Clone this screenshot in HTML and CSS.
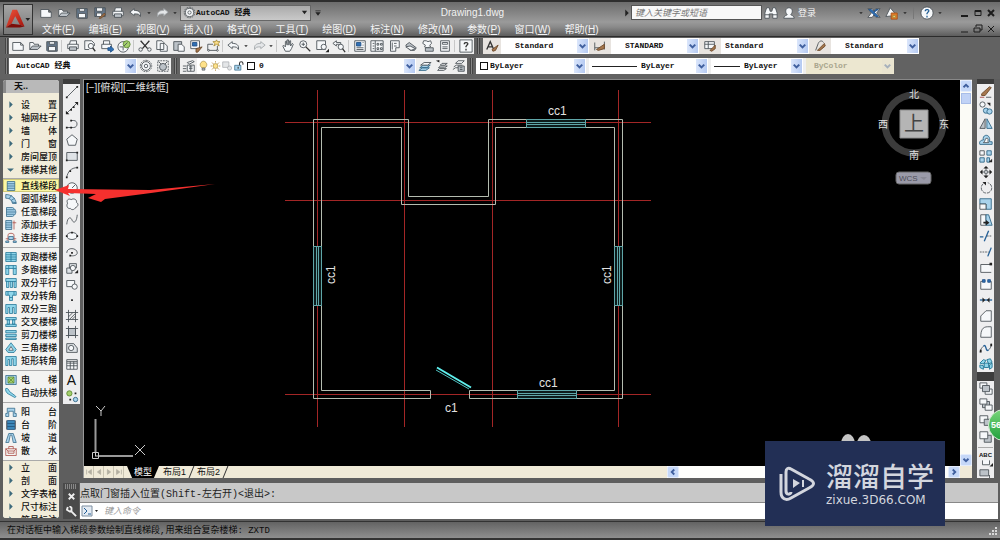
FILE: index.html
```html
<!DOCTYPE html>
<html lang="zh-CN">
<head>
<meta charset="utf-8">
<meta name="viewport" content="width=device-width, initial-scale=1">
<title>Drawing1.dwg</title>
<link rel="stylesheet" href="styles.css">
</head>
<body>
<svg class="defs" aria-hidden="true">
  <defs>
    <linearGradient id="red" x1="0" y1="0" x2="1" y2="1"><stop offset="0" stop-color="#f0563c"/><stop offset="1" stop-color="#a3120c"/></linearGradient>
    <linearGradient id="green" x1="0" y1="0" x2="0" y2="1"><stop offset="0" stop-color="#7ad67a"/><stop offset="1" stop-color="#1fa03c"/></linearGradient>
  </defs>
  <symbol id="new" viewBox="0 0 16 16"><path class="w" d="M2 4h9l3 3v6H2zM11 4v3h3"/></symbol>
  <symbol id="open" viewBox="0 0 16 16"><path class="w" d="M2 12V4h4l1 2h5v2"/><path class="g" d="M2 12l3-4h10l-4 4z"/></symbol>
  <symbol id="save" viewBox="0 0 16 16"><path class="n" d="M2 3h12v11H3l-1-1z"/><path class="w" d="M5 3h6v3H5zM4 8.500h8v5H4z"/></symbol>
  <symbol id="saveas" viewBox="0 0 16 16"><path class="n" d="M2 2h12v10H2z"/><path class="w" d="M4 2h7v4H4zM4 8h6v4H4z"/><path class="o" d="M7 14l6-6 1 2-5 4z"/></symbol>
  <symbol id="print" viewBox="0 0 16 16"><path class="w" d="M4 6l1-4h7v4M2 6h12v5H2z"/><path class="g" d="M4 9h8v4H4z"/></symbol>
  <symbol id="preview" viewBox="0 0 16 16"><path class="w" d="M2 2h8l3 3v3M2 2v10h5"/><circle class="w" cx="9" cy="8" r="3"/><path class="k2" d="M11 10l3 4"/></symbol>
  <symbol id="publish" viewBox="0 0 16 16"><path class="w" d="M4 6V2h7v4M2 6h11v5H2z"/><path class="bl" d="M9 10h3V8l4 4-4 3v-2H9z"/></symbol>
  <symbol id="globe" viewBox="0 0 16 16"><circle class="w" cx="7" cy="9" r="6"/><circle class="gr" cx="11" cy="6" r="4"/><path d="M8 8l4-4M3 9h4v4"/></symbol>
  <symbol id="cut" viewBox="0 0 16 16"><path class="k2" d="M3 2l8 9M13 2L5 11"/><circle cx="3" cy="12" r="2"/><circle cx="13" cy="12" r="2"/></symbol>
  <symbol id="copy" viewBox="0 0 16 16"><path class="w" d="M2 2h6l2 2v8H2zM6 5h5l3 3v6H6z"/></symbol>
  <symbol id="paste" viewBox="0 0 16 16"><path class="g" d="M2 3h9v10H2z"/><path class="w" d="M7 6h4l3 3v5H7z"/></symbol>
  <symbol id="match" viewBox="0 0 16 16"><path class="w" d="M2 2h10v9H2z"/><path class="bl" d="M4 4h5v4H4z"/><path class="o" d="M8 11l7-2-5 6H8z"/></symbol>
  <symbol id="block" viewBox="0 0 16 16"><path d="M2 6h6M2 6v7h11V8"/><path class="y" d="M12 1l1 2 3 0-2 2 1 3-3-2-3 2 1-3-2-2h3z"/><circle class="w" cx="3" cy="13" r="1"/><circle class="w" cx="13" cy="13" r="1"/></symbol>
  <symbol id="undo" viewBox="0 0 16 16"><path class="w" d="M1 7l5-4v2c5 0 8 2 7 7-1-3-3-3-7-3v2z"/></symbol>
  <symbol id="redo" viewBox="0 0 16 16"><path class="pale" d="M15 7l-5-4v2C5 5 2 7 3 12c1-3 3-3 7-3v2z"/></symbol>
  <symbol id="drop" viewBox="0 0 8 16"><path class="k" d="M2 7h4L4 9z"/></symbol>
  <symbol id="hand" viewBox="0 0 16 16"><path class="w" d="M5 14L2 8l1-1 2 2V3l1-1 1 5V1h1.500l.5 6 1-5h1v6l2-3 1 1-2 5-2 3z"/></symbol>
  <symbol id="zoom" viewBox="0 0 16 16"><circle class="w" cx="6" cy="6" r="4"/><path class="k2" d="M9 9l5 5"/><path d="M4 6h4M6 4v4"/></symbol>
  <symbol id="zwin" viewBox="0 0 16 16"><path class="w" d="M2 2h10v10H2z"/><circle class="w" cx="10" cy="9" r="3"/><path class="k" d="M12 15h4v-4z"/></symbol>
  <symbol id="zprev" viewBox="0 0 16 16"><path class="w" d="M1 5l4-3v2h5v2H5v2z"/><circle class="w" cx="10" cy="9" r="3"/><path class="k2" d="M12 11l3 4"/></symbol>
  <symbol id="props" viewBox="0 0 16 16"><path class="w" d="M2 2h12v12H2z"/><path class="bl" d="M4 4h5v4H4z"/><path d="M4 10h8M4 12h8M11 4h1M11 7h1"/></symbol>
  <symbol id="center" viewBox="0 0 16 16"><path class="w" d="M1 2h14v12H1zM6 2v12M8 5h2v2H8zM12 5h2v2h-2zM8 10h2v2H8zM12 10h2v2h-2zM3 5h2M3 8h2M3 11h2"/></symbol>
  <symbol id="palettes" viewBox="0 0 16 16"><path class="w" d="M4 2h10v8h-4v4H4zM6 4v8M8 5h3M8 8h3"/></symbol>
  <symbol id="sheet" viewBox="0 0 16 16"><path class="g" d="M2 7l4-3 8 6-2 3H7z"/><path class="w" d="M2 9l5-1 6 3-5 2z"/></symbol>
  <symbol id="markup" viewBox="0 0 16 16"><path class="w" d="M3 2h3l2 1 3-1 1 3-2 2 1 2-4 1-3-1 1-2-3-2z"/><path class="g" d="M5 10h9v4H5z"/></symbol>
  <symbol id="calc" viewBox="0 0 16 16"><path class="w" d="M3 2h10v12H3zM5 4h6v2H5zM5 9h6M5 11h6"/></symbol>
  <symbol id="help" viewBox="0 0 16 16"><path class="w" d="M1 1h14v14H1z"/><path class="k2" d="M6 6c0-3 5-2 4 0L8 8.500v1M8 11v2"/></symbol>
  <symbol id="tstyle" viewBox="0 0 16 16"><path class="k2" d="M2 12L6 3l4 9M4 9h5"/><path class="o" d="M8 12l7-5-3 6-3 1z"/></symbol>
  <symbol id="dstyle" viewBox="0 0 16 16"><path d="M2 4v9M13 3v9M2 10h11"/><path class="o" d="M4 12L13 6v5l-7 2z"/></symbol>
  <symbol id="tabstyle" viewBox="0 0 16 16"><path class="w" d="M2 3h11v8H2zM2 6h11M6 3v8"/><path class="o" d="M8 13l6-6v4l-4 3z"/></symbol>
  <symbol id="mstyle" viewBox="0 0 16 16"><path d="M3 13L6 5c2-4 5-3 6-1"/><path class="o" d="M5 13l8-8 1 3-6 5z"/></symbol>
  <symbol id="gear" viewBox="0 0 16 16"><circle class="w" cx="8" cy="8" r="5"/><circle cx="8" cy="8" r="2"/><path class="dash" d="M8 1.500a6.500 6.500 0 1 1 0 13 6.500 6.500 0 1 1 0-13"/></symbol>
  <symbol id="wsave" viewBox="0 0 16 16"><path class="dash" d="M2 2h12v12H2z"/><circle class="g" cx="8" cy="9" r="4"/><path d="M3 3l3 3M13 3l-3 3"/></symbol>
  <symbol id="layers" viewBox="0 0 16 16"><path class="w" d="M6 4l6-2 2 1-6 3zM6 7h8v7H6z"/><path d="M1 8h4M1 11h4M1 14h4M8 9h4M8 11h4M10 7v7"/></symbol>
  <symbol id="stack" viewBox="0 0 16 16"><path class="lb" d="M1 13l4-3h8l-4 3zM2 10l4-3h8l-4 3z"/><path class="w" d="M3 7l4-3h8l-4 3z"/></symbol>
  <symbol id="lprev" viewBox="0 0 16 16"><path class="w" d="M3 13l2-2h8l-3 2zM4 10l2-2h8l-3 2zM6 7l2-2h6l-3 2z"/><path class="k" d="M1 2l4-1v3z"/></symbol>
  <symbol id="lstate" viewBox="0 0 16 16"><path class="w" d="M1 12l3-2h4M2 9l3-2h7M4 5l3-3h7l-3 3z"/><path class="g" d="M7 8h7v6H7z"/><path d="M9 10h3M9 12h3"/></symbol>
  <symbol id="bulb" viewBox="0 0 16 16"><path class="y" d="M6 11c-6-5-1-10 2-10s8 5 2 10z"/><path class="g" d="M6 11h4v3H6z"/></symbol>
  <symbol id="sun" viewBox="0 0 16 16"><circle class="y" cx="8" cy="8" r="3.500"/><path class="os" d="M8 1v2M8 13v2M1 8h2M13 8h2M3 3l2 2M11 11l2 2M13 3l-2 2M5 11l-2 2"/></symbol>
  <symbol id="vpf" viewBox="0 0 16 16"><path class="pale" d="M1 2h9v8H1z"/><circle class="pale" cx="11" cy="11" r="3"/></symbol>
  <symbol id="lock" viewBox="0 0 16 16"><path class="lb" d="M1 7h9v7H1z"/><path class="k2" d="M8 7V4c0-3 5-3 5 0v2M6 9v3"/></symbol>
  <symbol id="chev" viewBox="0 0 16 16"><path class="cv" d="M4 6l4 4 4-4"/></symbol>
</svg>

<header class="titlebar">
  <button class="logo" aria-label="应用程序菜单"><svg viewBox="0 0 30 31"><path fill="url(#red)" d="M2 24L9 5h5l8 18-5-2-5-9-4 8z"/><path fill="#7d0e0a" d="M2 24l6-4 9 1 5 2-5 1z"/><path fill="#222" d="M23 14h5l-2.500 3z"/></svg></button>
  <div class="titlecol">
    <div class="titlerow">
      <div class="quick">
        <button aria-label="新建"><svg><use href="#new"/></svg></button><button aria-label="打开"><svg><use href="#open"/></svg></button><button aria-label="保存"><svg><use href="#save"/></svg></button><button aria-label="另存为"><svg><use href="#saveas"/></svg></button><button aria-label="打印"><svg><use href="#print"/></svg></button><button aria-label="放弃"><svg><use href="#undo"/></svg></button><button class="tiny" aria-label="放弃列表"><svg><use href="#drop"/></svg></button><button aria-label="重做"><svg><use href="#redo"/></svg></button><button class="tiny" aria-label="重做列表"><svg><use href="#drop"/></svg></button>
      </div>
      <div class="combo wsq"><svg class="lead"><use href="#gear"/></svg><select aria-label="工作空间"><option>AutoCAD 经典</option></select><svg class="tri" viewBox="0 0 8 8"><path d="M1 2h6L4 6z"/></svg></div>
      <button class="tiny" aria-label="自定义快速访问"><svg viewBox="0 0 8 16"><path class="k" d="M1 5h6v1H1zM1 7h6l-3 4z"/></svg></button>
      <h1>Drawing1.dwg</h1>
      <button class="tiny" aria-label="展开搜索"><svg viewBox="0 0 8 16"><path class="k" d="M2 4l4 4-4 4z"/></svg></button>
      <input class="search" type="text" aria-label="搜索" placeholder="键入关键字或短语">
      <div class="info">
        <button aria-label="查找"><svg viewBox="0 0 16 16"><path class="w" d="M1 14V8l2-6h3l1 4h2l1-4h3l2 6v6h-5V9H6v5z"/><path d="M1 10h5M10 10h5"/></svg></button><button class="login"><svg viewBox="0 0 16 16"><path class="w" d="M2 14c0-3 3-3 4-4-3-3-2-8 2-8s5 5 2 8c1 1 4 1 4 4z"/></svg>登录</button>
      </div>
      <div class="info">
        <button class="tiny" aria-label="登录菜单"><svg><use href="#drop"/></svg></button><button aria-label="Exchange"><svg viewBox="0 0 16 16"><path class="w" d="M1 3h5l2 3 2-3h5l-4 5 4 5h-5l-2-3-2 3H1l4-5z"/><path class="bl" d="M2 4h3l8 8h-3zM13 4h-3L8 7z"/></svg></button><button aria-label="Autodesk 360"><svg viewBox="0 0 16 16"><path class="w" d="M1 12L6 2l5 6v3z"/><path class="or" d="M7 8h7v7H7z"/><path class="y" d="M9 11h3v2H9z"/></svg></button><button class="tiny" aria-label="360 菜单"><svg><use href="#drop"/></svg></button><span class="vline"></span><button aria-label="帮助"><svg viewBox="0 0 16 16"><circle class="w" cx="8" cy="8" r="7"/><path class="bs" d="M6 6c0-3 5-2 4 0L8 8.500v1M8 11v2"/></svg></button><button class="tiny" aria-label="帮助菜单"><svg><use href="#drop"/></svg></button>
      </div>
      <div class="win"><button aria-label="最小化"><svg viewBox="0 0 12 12"><path d="M2 9h7"/></svg></button><button aria-label="最大化"><svg class="thin" viewBox="0 0 12 12"><path d="M3 3.500h6v5H3zM3 4.500h6"/></svg></button><button aria-label="关闭"><svg viewBox="0 0 12 12"><path d="M3 3l6 6M9 3L3 9"/></svg></button></div>
    </div>
    <nav class="menubar" aria-label="菜单">
      <button>文件(<u>F</u>)</button><button>编辑(<u>E</u>)</button><button>视图(<u>V</u>)</button><button>插入(<u>I</u>)</button><button>格式(<u>O</u>)</button><button>工具(<u>T</u>)</button><button>绘图(<u>D</u>)</button><button>标注(<u>N</u>)</button><button>修改(<u>M</u>)</button><button>参数(<u>P</u>)</button><button>窗口(<u>W</u>)</button><button>帮助(<u>H</u>)</button>
      <div class="win"><button aria-label="最小化图形"><svg viewBox="0 0 12 12"><path d="M2 9h7"/></svg></button><button aria-label="还原图形"><svg viewBox="0 0 12 12"><path d="M4 4V2h6v5H8M2 5h6v4H2z"/></svg></button><button aria-label="关闭图形"><svg viewBox="0 0 12 12"><path d="M3 3l6 6M9 3L3 9"/></svg></button></div>
    </nav>
  </div>
</header>

<section class="toolbars">
  <div class="row">
    <span class="grip"></span>
    <div class="bar">
      <button aria-label="新建"><svg><use href="#new"/></svg></button><button aria-label="打开"><svg><use href="#open"/></svg></button><button aria-label="保存"><svg><use href="#save"/></svg></button><i></i>
      <button aria-label="打印"><svg><use href="#print"/></svg></button><button aria-label="预览"><svg><use href="#preview"/></svg></button><button aria-label="发布"><svg><use href="#publish"/></svg></button><button aria-label="三维打印"><svg><use href="#globe"/></svg></button><i></i>
      <button aria-label="剪切"><svg><use href="#cut"/></svg></button><button aria-label="复制"><svg><use href="#copy"/></svg></button><button aria-label="粘贴"><svg><use href="#paste"/></svg></button><button aria-label="特性匹配"><svg><use href="#match"/></svg></button><button aria-label="块编辑器"><svg><use href="#block"/></svg></button><i></i>
      <button aria-label="放弃"><svg><use href="#undo"/></svg></button><button class="tiny" aria-label="放弃列表"><svg><use href="#drop"/></svg></button><button aria-label="重做"><svg><use href="#redo"/></svg></button><button class="tiny" aria-label="重做列表"><svg><use href="#drop"/></svg></button><i></i>
      <button aria-label="平移"><svg><use href="#hand"/></svg></button><button aria-label="缩放"><svg><use href="#zoom"/></svg></button><button aria-label="窗口缩放"><svg><use href="#zwin"/></svg></button><button aria-label="上一个"><svg><use href="#zprev"/></svg></button><i></i>
      <button aria-label="特性"><svg><use href="#props"/></svg></button><button aria-label="设计中心"><svg><use href="#center"/></svg></button><button aria-label="工具选项板"><svg><use href="#palettes"/></svg></button><button aria-label="图纸集"><svg><use href="#sheet"/></svg></button><button aria-label="标记集"><svg><use href="#markup"/></svg></button><button aria-label="计算器"><svg><use href="#calc"/></svg></button><i></i>
      <button aria-label="帮助"><svg><use href="#help"/></svg></button>
    </div>
    <span class="grip"></span>
    <div class="bar">
      <button class="st" aria-label="文字样式"><svg><use href="#tstyle"/></svg></button><div class="combo sty"><select aria-label="文字样式"><option>Standard</option></select><svg class="chev"><use href="#chev"/></svg></div>
      <button class="st" aria-label="标注样式"><svg><use href="#dstyle"/></svg></button><div class="combo sty"><select aria-label="标注样式"><option>STANDARD</option></select><svg class="chev"><use href="#chev"/></svg></div>
      <button class="st" aria-label="表格样式"><svg><use href="#tabstyle"/></svg></button><div class="combo sty near"><select aria-label="表格样式"><option>Standard</option></select><svg class="chev"><use href="#chev"/></svg></div>
      <button class="st" aria-label="引线样式"><svg><use href="#mstyle"/></svg></button><div class="combo sty"><select aria-label="引线样式"><option>Standard</option></select><svg class="chev"><use href="#chev"/></svg></div>
    </div>
  </div>
  <div class="row">
    <span class="grip"></span>
    <div class="bar"><div class="combo ws near"><select aria-label="工作空间"><option>AutoCAD 经典</option></select><svg class="chev"><use href="#chev"/></svg></div><button aria-label="设置"><svg><use href="#gear"/></svg></button><button aria-label="保存工作空间"><svg><use href="#wsave"/></svg></button></div>
    <span class="grip"></span>
    <div class="bar"><button aria-label="图层特性"><svg><use href="#layers"/></svg></button><div class="combo layer"><svg class="s"><use href="#bulb"/></svg><svg class="s"><use href="#sun"/></svg><svg class="s"><use href="#vpf"/></svg><svg class="s"><use href="#lock"/></svg><span class="swatch"></span><select aria-label="图层"><option>0</option></select><svg class="chev"><use href="#chev"/></svg></div><button aria-label="置为当前"><svg><use href="#stack"/></svg></button><button aria-label="上一图层"><svg><use href="#lprev"/></svg></button><button aria-label="图层状态"><svg><use href="#lstate"/></svg></button></div>
    <span class="grip"></span>
    <div class="bar gap"><div class="combo col"><span class="swatch"></span><select aria-label="颜色"><option>ByLayer</option></select><svg class="chev"><use href="#chev"/></svg></div><div class="combo lt"><span class="sample"></span><select aria-label="线型"><option>ByLayer</option></select><svg class="chev"><use href="#chev"/></svg></div><div class="combo lw"><span class="sample"></span><select aria-label="线宽"><option>ByLayer</option></select><svg class="chev"><use href="#chev"/></svg></div><div class="combo plot near"><select aria-label="打印样式" disabled><option>ByColor</option></select><svg class="chev"><use href="#chev"/></svg></div></div>
  </div>
</section>

<main class="work">
  <aside class="palette">
    <div class="phead">天..</div>
    <div class="grp cat">
      <button><svg viewBox="0 0 16 16"><path class="ar" d="M6 2l6 6-6 6z"/></svg><span>设 置</span></button>
      <button><svg viewBox="0 0 16 16"><path class="ar" d="M6 2l6 6-6 6z"/></svg><span>轴网柱子</span></button>
      <button><svg viewBox="0 0 16 16"><path class="ar" d="M6 2l6 6-6 6z"/></svg><span>墙 体</span></button>
      <button><svg viewBox="0 0 16 16"><path class="ar" d="M6 2l6 6-6 6z"/></svg><span>门 窗</span></button>
      <button><svg viewBox="0 0 16 16"><path class="ar" d="M6 2l6 6-6 6z"/></svg><span>房间屋顶</span></button>
      <button><svg viewBox="0 0 16 16"><path class="ar" d="M2 6h12l-6 6z"/></svg><span>楼梯其他</span></button>
    </div>
    <div class="grp">
      <button class="on"><svg viewBox="0 0 16 16"><path class="lb" d="M3 2h10v12H3zM3 5h10M3 8h10M3 11h10"/></svg><span>直线梯段</span></button>
      <button><svg viewBox="0 0 16 16"><path class="lb" d="M1 2c8 0 13 5 14 12h-5c-1-5-4-7-9-7zM5 8l4-5M8 10l5-3M9 12l6 1"/></svg><span>圆弧梯段</span></button>
      <button><svg viewBox="0 0 16 16"><path class="lb" d="M2 2h8c6 3 6 9 0 12H2zM2 5h11M2 8h12M2 11h11"/></svg><span>任意梯段</span></button>
      <button><svg viewBox="0 0 16 16"><path class="lb" d="M1 2h8v12H1zM1 5h8M1 8h8M1 11h8"/><path class="rs" d="M12 2v12M10 5h5"/></svg><span>添加扶手</span></button>
      <button><svg viewBox="0 0 16 16"><path class="rs" d="M4 13V4c0-3 8-3 8 0v9M1 9h14"/><path class="lb" d="M5 6h6v4H5zM1 12h4v2H1zM11 12h4v2h-4z"/></svg><span>连接扶手</span></button>
    </div>
    <div class="grp">
      <button><svg viewBox="0 0 16 16"><path class="cy" d="M1 2h14v12H1zM8 2v12M1 5h14M1 11h14M1 8h14"/></svg><span>双跑楼梯</span></button>
      <button><svg viewBox="0 0 16 16"><path class="cy" d="M1 2h14v12h-4V6H5v8H1zM1 6h4M11 6h4M5 2v4M11 2v4"/></svg><span>多跑楼梯</span></button>
      <button><svg viewBox="0 0 16 16"><path class="cy" d="M1 2h14v4H1zM2 6v8h3V6M7 6v8h3V6M12 6v8h3V6"/></svg><span>双分平行</span></button>
      <button><svg viewBox="0 0 16 16"><path class="cy" d="M1 2h14v5h-5v7H6V7H1zM4 2v5M12 2v5M6 10h4"/></svg><span>双分转角</span></button>
      <button><svg viewBox="0 0 16 16"><path class="cy" d="M1 2h14v12h-3V6h-2v8H6V6H4v8H1z"/></svg><span>双分三跑</span></button>
      <button><svg viewBox="0 0 16 16"><path class="cy" d="M1 2h14v3H1zM1 11h14v3H1zM3 5h3v6H3zM10 5h3v6h-3z"/></svg><span>交叉楼梯</span></button>
      <button><svg viewBox="0 0 16 16"><path class="cy" d="M1 2h14v3H1zM1 7h14v3H1zM1 12h14v2H1z"/></svg><span>剪刀楼梯</span></button>
      <button><svg viewBox="0 0 16 16"><path class="cy" d="M8 1l7 9-3 4H4l-3-4z"/><path class="w" d="M8 6l3 5H5z"/></svg><span>三角楼梯</span></button>
      <button><svg viewBox="0 0 16 16"><path class="cy" d="M1 2h14v12h-4V5H9v9H6V6H4v8H1z"/></svg><span>矩形转角</span></button>
    </div>
    <div class="grp">
      <button><svg viewBox="0 0 16 16"><path class="lb" d="M1 2h14v12H1z"/><path class="gr" d="M4 4h8v8H4zM4 4l8 8M12 4l-8 8"/></svg><span>电 梯</span></button>
      <button><svg viewBox="0 0 16 16"><path class="cy" d="M1 2c3-1 4 2 5 4l8 6c1 1 0 2-1 2L4 9C2 8 0 4 1 2z"/></svg><span>自动扶梯</span></button>
    </div>
    <div class="grp">
      <button><svg viewBox="0 0 16 16"><path class="lb" d="M3 3h10v7h2v4h-4V7H5v7H1v-4h2z"/></svg><span>阳 台</span></button>
      <button><svg viewBox="0 0 16 16"><path class="db" d="M3 2h10v12H3zM3 6h10M3 10h10"/><path d="M2 2v12M14 2v12"/></svg><span>台 阶</span></button>
      <button><svg viewBox="0 0 16 16"><path class="lb" d="M5 2h6l4 12h-4L9 4H7L5 14H1z"/></svg><span>坡 道</span></button>
      <button><svg viewBox="0 0 16 16"><path class="rs" d="M5 5V2h6v3M1 5h14v9H1zM4 8h8v3H4zM1 5l3 3M15 5l-3 3"/></svg><span>散 水</span></button>
    </div>
    <div class="grp cat last">
      <button><svg viewBox="0 0 16 16"><path class="ar" d="M6 2l6 6-6 6z"/></svg><span>立 面</span></button>
      <button><svg viewBox="0 0 16 16"><path class="ar" d="M6 2l6 6-6 6z"/></svg><span>剖 面</span></button>
      <button><svg viewBox="0 0 16 16"><path class="ar" d="M6 2l6 6-6 6z"/></svg><span>文字表格</span></button>
      <button><svg viewBox="0 0 16 16"><path class="ar" d="M6 2l6 6-6 6z"/></svg><span>尺寸标注</span></button>
      <button><svg viewBox="0 0 16 16"><path class="ar" d="M6 2l6 6-6 6z"/></svg><span>符号标注</span></button>
    </div>
  </aside>

  <div class="center">
    <div class="stage">
      <div class="vtools" role="toolbar" aria-label="绘图">
        <button aria-label="直线"><svg viewBox="0 0 16 16"><path d="M2 14L14 2"/><path class="k" d="M1 13h2v2H1zM13 1h2v2h-2z"/></svg></button>
        <button aria-label="构造线"><svg viewBox="0 0 16 16"><path d="M2 14L14 2"/><path class="k" d="M1 15v-4l4 4zM15 1v4l-4-4zM6 9h2v2H6zM9 6h2v2H9z"/></svg></button>
        <button aria-label="多段线"><svg viewBox="0 0 16 16"><path d="M2 12h8c5 0 5-8 0-8H7"/><path class="k" d="M1 11h2v2H1zM6 3h2v2H6zM6 11h2v2H6z"/></svg></button>
        <button aria-label="多边形"><svg viewBox="0 0 16 16"><path class="w" d="M8 2l6 5-2 7H4L2 7z"/></svg></button>
        <button aria-label="矩形"><svg viewBox="0 0 16 16"><path class="lg" d="M2 4h12v9H2z"/><path class="k" d="M1 12h2v2H1zM13 3h2v2h-2z"/></svg></button>
        <button aria-label="圆弧"><svg viewBox="0 0 16 16"><path d="M2 14C3 8 7 3 14 3"/><path class="k" d="M1 13h2v2H1zM13 2h2v2h-2zM5 6h2v2H5z"/></svg></button>
        <button aria-label="圆"><svg viewBox="0 0 16 16"><circle class="w" cx="8" cy="8" r="6"/><path d="M8 8l4-4"/></svg></button>
        <button aria-label="修订云线"><svg viewBox="0 0 16 16"><path class="w" d="M3 7C1 4 4 1 7 3c3-2 7 0 6 3 3 2 2 5-1 6-1 3-5 3-6 1-3 1-5-3-3-6z"/></svg></button>
        <button aria-label="样条曲线"><svg viewBox="0 0 16 16"><path d="M2 13C3 3 7 5 8 8s5 5 6-6"/></svg></button>
        <button aria-label="椭圆"><svg viewBox="0 0 16 16"><ellipse class="w" cx="8" cy="8" rx="6" ry="4"/><path class="k" d="M1 7h2v2H1zM7 3h2v2H7zM13 7h2v2h-2z"/></svg></button>
        <button aria-label="椭圆弧"><svg viewBox="0 0 16 16"><path d="M2 9c0-7 12-6 12 0 0 3-5 4-8 3"/><path class="k" d="M5 11h2v2H5zM7 8h2v2H7z"/></svg></button>
        <button aria-label="插入块"><svg viewBox="0 0 16 16"><path class="lg" d="M5 3h8v5H5zM2 8h6v6H2z"/><circle class="w" cx="9" cy="8" r="3"/><path class="k" d="M11 14h4v-4z"/></svg></button>
        <button aria-label="创建块"><svg viewBox="0 0 16 16"><path class="w" d="M2 4h9v7H2z"/><circle class="w" cx="11" cy="11" r="3"/></svg></button>
        <button aria-label="点"><svg viewBox="0 0 16 16"><path class="k" d="M7 7h2v2H7z"/></svg></button>
        <button aria-label="图案填充"><svg viewBox="0 0 16 16"><path d="M4 1v14M12 1v14M1 4h14M1 12h14M4 9l5-5M5 12l7-7M8 12l4-4"/></svg></button>
        <button aria-label="渐变色"><svg viewBox="0 0 16 16"><path class="g" d="M4 4h8v8H4z"/><path d="M4 1v14M12 1v14M1 4h14M1 12h14"/></svg></button>
        <button aria-label="面域"><svg viewBox="0 0 16 16"><path class="lg" d="M2 3h8l4 5v5H2z"/><circle class="w" cx="7" cy="8" r="3"/></svg></button>
        <button aria-label="表格"><svg viewBox="0 0 16 16"><path class="w" d="M2 3h12v11H2zM2 7h12M2 10h12M6 5v9M10 5v9M2 5h12"/></svg></button>
        <button aria-label="多行文字"><span class="bigA">A</span></button>
        <button aria-label="添加选定对象"><svg viewBox="0 0 16 16"><circle class="gr" cx="5" cy="5" r="3"/><circle class="lb" cx="12" cy="12" r="2.500"/><path class="k" d="M11 4h2v2h-2zM5 11h2v2H5z"/></svg></button>
      </div>
      <div class="view">
        <div class="canvasrow">
          <svg class="canvas" viewBox="84 80 876 386" role="img" aria-label="平面图">
            <text class="vlabel" x="86" y="91">[−][俯视][二维线框]</text>
            <path class="axis" d="M317.500 90v337M404.500 90v337M492.500 90v337M618.500 90v337M285 122.500h366M285 200.500h366M285 394.500h366"/>
            <path class="hole" d="M431 390h38v9h-38z"/>
            <path class="axis" d="M431 394.500h38"/>
            <path class="wall" d="M430.500 390.500v8H313.500V119.500h95v77h80v-77h134v279H469.500v-8H614.500V127.500H495.500v77h-94v-77H321.500v263z"/>
            <g class="window"><path d="M526.500 119.500h59v8h-59zM526 122.500h59M526 124.500h59M517.500 390.500h59v8h-59zM517 393.500h59M517 395.500h59M313.500 246.500h8v59h-8zM316.500 246v59M318.500 246v59M614.500 246.500h8v59h-8zM617.500 246v59M619.500 246v59"/></g>
            <path class="door" d="M437 367.500l34 20"/><path class="leaf" d="M436 370l33 19"/>
            <g class="tag"><text x="548" y="115">cc1</text><text x="539" y="387">cc1</text><text x="445" y="412">c1</text><text transform="translate(335 284) rotate(-90)">cc1</text><text transform="translate(611 284) rotate(-90)">cc1</text></g>
            <path class="ucs" d="M95.500 419v33M99 456h34"/><path class="ucsb" d="M92.500 452.500h6v6h-6zM95 456h4M95.500 452v4M96 406l5 5 4-5M101 411v5M135 445l10 10M145 445l-10 10"/>
            <circle class="ring" cx="914" cy="124" r="29"/><path class="cube" d="M900 110h28v28h-28z"/>
            <text class="top" x="904" y="131">上</text>
            <g class="dir"><text x="909" y="98">北</text><text x="909" y="159">南</text><text x="878" y="128">西</text><text x="939" y="128">东</text></g>
            <rect class="wcs" x="896" y="172" width="35" height="12" rx="3"/><text class="wcst" x="899" y="181">WCS</text><path class="tick" d="M920 177h7l-3 3z"/>
            <path class="ears" d="M841 444a7 10 0 0 1 14 0zM857 444a7 9 0 0 1 14 0z"/>
          </svg>
          <div class="vscroll"><button aria-label="向上滚动"><svg viewBox="0 0 16 16"><path class="cv" d="M4 10l4-4 4 4"/></svg></button><span class="thumb"></span><button class="end" aria-label="向下滚动"><svg><use href="#chev"/></svg></button></div>
        </div>
        <div class="tabs">
          <div class="nav"><button aria-label="第一个"><svg viewBox="0 0 10 10"><path d="M2 2v6M8 2L4 5l4 3z"/></svg></button><button aria-label="前一个"><svg viewBox="0 0 10 10"><path d="M7 2L3 5l4 3z"/></svg></button><button aria-label="后一个"><svg viewBox="0 0 10 10"><path d="M3 2l4 3-4 3z"/></svg></button><button aria-label="最后一个"><svg viewBox="0 0 10 10"><path d="M8 2v6M2 2l4 3-4 3z"/></svg></button></div>
          <button class="model">模型</button><button class="lay">布局1</button><b></b><button class="lay">布局2</button><b></b>
          <div class="hscroll"><button aria-label="向左滚动"><svg viewBox="0 0 16 16"><path class="cv" d="M10 4L6 8l4 4"/></svg></button><button class="end" aria-label="向右滚动"><svg viewBox="0 0 16 16"><path class="cv" d="M6 4l4 4-4 4"/></svg></button></div>
        </div>
      </div>
      <div class="rightcol">
        <div class="vtools" role="toolbar" aria-label="修改">
          <button aria-label="删除"><svg viewBox="0 0 16 16"><path class="o" d="M3 10l9-8 2 1-7 9H3z"/><path class="rs" d="M1 14h5"/><path d="M8 14h6"/></svg></button>
          <button aria-label="复制"><svg viewBox="0 0 16 16"><circle class="w" cx="4" cy="4" r="3"/><circle class="lb" cx="8" cy="11" r="3"/><circle class="lb" cx="12" cy="12" r="3"/><path class="k" d="M9 2h4v4z"/></svg></button>
          <button aria-label="镜像"><svg viewBox="0 0 16 16"><path class="g" d="M7 2v11H1z"/><path class="lb" d="M9 2v11h6z"/></svg></button>
          <button aria-label="偏移"><svg viewBox="0 0 16 16"><path class="lb" d="M1 13h14v-3h-3C14 0 3 1 5 8 1 8 0 11 1 13z"/><path class="w" d="M5 11h6c-2-2 1-5-2-5s-1 3-4 5z"/></svg></button>
          <button aria-label="阵列"><svg viewBox="0 0 16 16"><path class="w" d="M1 2h5v5H1z"/><path class="lb" d="M9 2h5v5H9zM1 10h5v5H1zM9 10h3v5H9z"/><path class="k" d="M11 15h4v-4z"/></svg></button>
          <button aria-label="移动"><svg viewBox="0 0 16 16"><path d="M8 3v3M8 10v3M3 8h3M10 8h3"/><path class="w" d="M6.500 6.500h3v3h-3z"/><path class="k" d="M5 4h6L8 1zM5 12h6l-3 3zM4 5v6L1 8zM12 5v6l3-3z"/></svg></button>
          <button aria-label="旋转"><svg viewBox="0 0 16 16"><path class="d2" d="M5 3a6 6 0 1 0 5-1"/><path class="k" d="M4 1h4v4z"/></svg></button>
          <button aria-label="缩放"><svg viewBox="0 0 16 16"><path class="lb" d="M1 2h13v12H8V8H1z"/><path class="w" d="M1 8h7v6H1z"/></svg></button>
          <button aria-label="拉伸"><svg viewBox="0 0 16 16"><path class="w" d="M2 2h6v12H2z"/><path class="lb" d="M8 2h3l4 12H8z"/><path class="k" d="M5 10h3V8l4 3-4 3v-2H5z"/></svg></button>
          <button aria-label="修剪"><svg viewBox="0 0 16 16"><path class="bs" d="M6 14L11 2M1 9h4"/><path class="dash" d="M9 8h6"/></svg></button>
          <button aria-label="延伸"><svg viewBox="0 0 16 16"><path class="bs" d="M10 13l4-10"/><path class="dash" d="M1 8h10"/></svg></button>
          <button aria-label="打断于点"><svg viewBox="0 0 16 16"><path class="w" d="M13 4H2v9h12"/><path class="k" d="M12 2h3v3h-3z"/></svg></button>
          <button aria-label="打断"><svg viewBox="0 0 16 16"><path class="w" d="M4 5H2v9h12V5h-2"/><path class="bl" d="M4 3h3v3H4zM10 3h3v3h-3z"/></svg></button>
          <button aria-label="合并"><svg viewBox="0 0 16 16"><path class="bs" d="M1 8h14"/><path class="k" d="M4 5l3 3-3 3zM12 5v6L9 8z"/></svg></button>
          <button aria-label="倒角"><svg viewBox="0 0 16 16"><path class="w" d="M14 2H8L2 8v6h12z"/></svg></button>
          <button aria-label="圆角"><svg viewBox="0 0 16 16"><path class="w" d="M14 2H10C4 2 2 6 2 14h12z"/></svg></button>
          <button aria-label="光顺曲线"><svg viewBox="0 0 16 16"><path d="M1 13c1-4 2-5 4-7M11 10c2-1 3-4 3-7"/><path class="bs" d="M5 6c4-4 2 8 6 4"/><path class="k" d="M1 10h2v3H1zM13 3h2v3h-2z"/></svg></button>
          <button aria-label="分解"><svg viewBox="0 0 16 16"><path class="cy" d="M1 7l4-4 3 1-3 4zM9 3l4-1 2 4-4 2zM1 9l4 1v4l-4-2zM6 7h5v5H6zM12 9l3-2v5l-3 2z"/></svg></button>
        </div>
        <div class="vtools low" role="toolbar" aria-label="绘图次序">
          <button aria-label="前置"><svg viewBox="0 0 16 16"><path class="w" d="M1 1h8v6H1zM7 8h8v6H7z"/><path class="g" d="M4 4h8v7H4z"/></svg></button>
          <button aria-label="后置"><svg viewBox="0 0 16 16"><path class="g" d="M4 4h8v7H4z"/><path class="w" d="M1 1h8v6H1zM7 8h8v6H7z"/></svg></button>
          <button aria-label="置于对象之上"><svg viewBox="0 0 16 16"><path class="w" d="M1 2h9v8H1z"/><path class="g" d="M6 6h8v7H6z"/></svg></button>
          <button aria-label="置于对象之下"><svg viewBox="0 0 16 16"><path class="g" d="M6 6h8v8H6z"/><path class="w" d="M1 2h9v8H1z"/></svg></button>
          <i></i>
          <button aria-label="文字前置" class="abc"><span>ABC</span><svg viewBox="0 0 16 8"><path class="w" d="M4 1v5h8V1"/><path class="k" d="M12 8h4V4z"/></svg></button>
          <button aria-label="填充后置"><svg viewBox="0 0 16 16"><path class="g" d="M1 2h10v7H1z"/><path d="M5 12h7V8"/></svg></button>
        </div>
      </div>
    </div>
    <div class="command">
      <div class="chandle"><span class="dots"></span><button aria-label="关闭命令行"><svg viewBox="0 0 12 12"><path d="M3 3l6 6M9 3L3 9"/></svg></button><button aria-label="自定义"><svg viewBox="0 0 12 12"><path d="M5 5l6 6M2 1L1 4l3 2 2-1V2L4 0"/></svg></button></div>
      <div class="cbody">
        <output class="hist">点取门窗插入位置(Shift-左右开)&lt;退出&gt;:</output>
        <div class="cline"><svg class="prompt" viewBox="0 0 18 12"><path class="pb" d="M1 1h10v10H1z"/><path class="bs" d="M3 3l3 3-3 3M7 9h3"/><path class="k" d="M14 5h3l-1.500 2z"/></svg><input type="text" aria-label="命令" placeholder="键入命令"></div>
      </div>
    </div>
  </div>
</main>

<footer class="status"><span>在对话框中输入梯段参数绘制直线梯段,用来组合复杂楼梯: ZXTD</span><svg viewBox="0 0 10 10"><path d="M7 1h2v2H7zM4 4h2v2H4zM7 4h2v2H7zM1 7h2v2H1zM4 7h2v2H4zM7 7h2v2H7z"/></svg></footer>

<svg class="pointer" viewBox="55 183 161 20" aria-hidden="true"><path d="M55 190l14-5-1 4 82 1 65-6-64 9-46 6-4 3-13-4 8-4-28-1 2 3z"/></svg>
<svg class="ball" viewBox="988 408 12 34" role="img" aria-label="56"><circle cx="1004" cy="425" r="15.500"/><text x="991" y="428">56</text></svg>
<aside class="mark">
  <svg viewBox="0 0 36 36" aria-hidden="true"><path d="M2 8v18c0 7 5 9 10 6l18-10c6-3 6-6 0-9L12 3C9 1 7 3 7 6v19c0 4 5 4 5 1"/><path class="f" d="M14 13l7 4-7 5zM23 14h2v7h-2z"/></svg>
  <p><strong>溜溜自学</strong><span>zixue.3D66.COM</span></p>
</aside>
</body>
</html>
```
FILE: styles.css
```css
* { box-sizing: border-box; }
body {
  margin: 0;
  height: 100vh;
  display: flex;
  flex-direction: column;
  position: relative;
  overflow: hidden;
  background: #5e5e5e;
  color: #111;
  font: 9px/12px "Liberation Sans", "Noto Sans CJK SC", sans-serif;
}
button, input, select { font: inherit; color: inherit; margin: 0; padding: 0; border: 0; background: none; border-radius: 0; }
button { display: flex; align-items: center; justify-content: center; }
select { appearance: none; flex: 1; min-width: 0; outline: 0; opacity: 1; }
.defs { position: absolute; width: 0; height: 0; }

/* Icon paint */
svg { fill: none; stroke: #4c5258; stroke-width: 1; display: block; flex: none; }
.w { fill: #f6f8fa; }
.g { fill: #bcc2c8; }
.lg { fill: #dfe3e7; }
.n { fill: #66788c; }
.o { fill: #a5764d; stroke: #6d4a2c; }
.or { fill: #e07a28; stroke: #a5521a; }
.os { stroke: #a67518; }
.y { fill: #ffe28a; stroke: #a68a3a; }
.gr { fill: #a4cf6c; stroke: #5d8a34; }
.bl { fill: #2f6fb4; stroke: #235288; }
.lb { fill: #a9d3ec; stroke: #2f6585; }
.db { fill: #3b86b8; stroke: #1d4f78; }
.cy { fill: #8fd6ea; stroke: #1f7394; }
.pale { fill: #e4e6e8; stroke: #a4a8ac; }
.k { fill: #222; stroke: none; }
.k2 { stroke: #333; stroke-width: 1.5; }
.bs { stroke: #235f96; stroke-width: 1.5; }
.rs { stroke: #a8453f; }
.d2 { stroke-dasharray: 4 1; }
.dash { stroke-dasharray: 2 1; }
.cv { stroke: #3f5f9e; stroke-width: 3; }
.ar { fill: #3d6a7c; stroke: none; }

/* Title */
.titlebar {
  display: flex;
  height: 37px;
  padding: 2px 3px 0;
  gap: 4px;
  background: linear-gradient(#2e2e2e 0 2px, #6c6c6c 2px, #9a9a9a 22px, #8a8a8a 27px, #5d5d5d 36px, #2c2c2c 36px);
}
.logo { width: 30px; height: 31px; margin-top: 2px; border: 1px solid #333; background: linear-gradient(#a5a5a5, #777); }
.logo svg { width: 28px; height: 29px; stroke: none; }
.titlecol { flex: 1; min-width: 0; }
.titlerow { display: flex; align-items: center; height: 21px; }
.titlerow button svg { width: 14px; height: 14px; }
.quick { display: flex; }
.quick button, .info button { width: 18px; height: 16px; }
.titlerow button.tiny, .bar button.tiny { width: 8px; }
.titlerow button.tiny svg, .bar button.tiny svg { width: 8px; height: 14px; }
.titlerow h1 { flex: 1; margin: 0; text-align: center; font-size: 10px; font-weight: 400; color: #f2f2f2; }
.search { width: 131px; height: 15px; padding: 0 3px; background: #f8f8f8; border: 1px solid #555; }
.search::placeholder { color: #777; font-style: italic; opacity: 1; }
.info { display: flex; align-items: center; color: #f4f4f4; }
.info .login { width: auto; gap: 2px; padding-left: 2px; }
.info + .info { margin-left: 41px; }
.vline { width: 1px; height: 12px; margin: 0 4px; background: #777; }
.win { display: flex; margin-left: 14px; }
.win button { width: 13px; height: 12px; }
.win svg, .titlerow .win svg { width: 12px; height: 12px; stroke: #1c1c1c; stroke-width: 2; }
.titlerow .win .thin { stroke-width: 1; }
.menubar { display: flex; gap: 14px; padding-left: 5px; height: 13px; color: #f4f4f4; font-size: 10px; }
.menubar .win { margin-left: auto; }
.menubar .win svg { stroke-width: 1; }

/* Combos */
.combo {
  display: flex;
  align-items: center;
  height: 16px;
  padding-left: 14px;
  background: #fff;
  color: #111;
  font: 700 8px/12px "Liberation Mono", "Noto Sans CJK SC", monospace;
  overflow: hidden;
}
.combo.near { padding-left: 4px; }
.chev { width: 11px; height: 14px; margin-right: 1px; background: linear-gradient(90deg, #dbe6fb, #b5caf2); }
.swatch { width: 8px; height: 8px; border: 1px solid #111; margin-right: 2px; background: #fff; }
.sample { height: 1px; background: #222; margin-right: 4px; }
.combo.wsq { width: 131px; height: 16px; padding: 0 2px; margin: 0 3px 0 1px; background: linear-gradient(#aaa, #c9c9c9); border: 1px solid #666; }
.lead { width: 13px; height: 13px; }
.tri { width: 7px; height: 7px; fill: #222; stroke: none; }
.sty { width: 88px; }
.combo.ws { width: 128px; padding-left: 7px; }
.combo.layer { width: 219px; padding-left: 1px; gap: 1px; }
.layer .s { width: 11px; height: 12px; }
.layer .swatch { margin-right: 3px; margin-left: 1px; }
.combo.col { width: 110px; padding-left: 4px; }
.combo.lt { width: 119px; padding-left: 3px; }
.lt .sample { width: 45px; }
.combo.lw { width: 92px; padding-left: 3px; }
.lw .sample { width: 26px; }
.combo.plot { width: 88px; padding-left: 8px; background: #ece7d0; color: #aaa68e; }
.plot .chev { background: #e6e2d2; opacity: .4; }

/* Toolbars */
.toolbars { display: flex; flex-direction: column; gap: 4px; padding: 1px 4px 5px; background: #626262; }
.row { display: flex; }
.grip { width: 3px; height: 16px; margin: 0 1px; border: 1px solid #444; border-width: 0 1px; background: #858585; }
.grip:not(:first-child) { margin: 0 3px; }
.bar { display: flex; align-items: center; height: 16px; background: #efefef; }
.bar.gap { gap: 3px; }
.bar button { width: 17px; height: 16px; }
.bar button svg { width: 14px; height: 14px; }
.bar i { width: 1px; height: 12px; margin: 0 2px 0 1px; background: #c8c8c8; }
.bar button.st { width: 22px; background: #e8e4e0; }
.bar button.st:first-child { width: 18px; }

/* Workspace */
.work { flex: 1; min-height: 0; display: flex; gap: 4px; padding: 0 1px 2px 3px; }
.palette { width: 56px; flex: none; margin: 1px 0 1px; overflow: hidden; background: #f3f3f1; border-radius: 3px; }
.phead { height: 13px; padding-left: 8px; background: #b9b9b9; border-left: 3px solid #888; font-weight: 700; }
.grp { padding: 2px 0 3px; border-bottom: 1px solid #aaa; }
.grp.cat { background: #f1ecda; padding-top: 5px; padding-bottom: 2px; }
.grp.cat + .grp { padding-top: 0; }
.grp.cat.last { padding-top: 0; }
.grp button { width: 100%; height: 13px; gap: 4px; justify-content: flex-start; padding-left: 2px; }
.grp svg { width: 12px; height: 12px; }
.grp.cat svg { width: 11px; height: 9px; margin-right: 1px; }
.grp span { width: 36px; white-space: nowrap; text-align: justify; text-align-last: justify; line-height: 13px; font-weight: 500; font-family: "Noto Sans CJK SC", sans-serif; }
.grp .on { background: #fbf6a4; outline: 1px solid #cfc978; outline-offset: -1px; }

.center { flex: 1; min-width: 0; display: flex; flex-direction: column; gap: 5px; }
.stage { flex: 1; min-height: 0; display: flex; gap: 3px; }
.vtools { width: 17px; flex: none; align-self: flex-start; background: #eeeeef; border-top: 5px solid #3d3d3d; }
.vtools button { width: 100%; height: 16px; }
.vtools svg { width: 14px; height: 14px; }
.vtools i { display: block; height: 1px; margin: 2px 1px 3px; background: #aaa; }
.bigA { font: 14px/16px "Liberation Sans", sans-serif; }
.low { border-top-width: 9px; }
.vtools .abc { flex-direction: column; }
.abc span { font: 700 6px/7px "Liberation Sans", sans-serif; }
.abc svg { height: 8px; }
.rightcol { width: 22px; flex: none; margin-left: 2px; overflow: hidden; }
.view { flex: 1; min-width: 0; display: flex; flex-direction: column; border-left: 1px solid #999; }
.canvasrow { flex: 1; min-height: 0; display: flex; background: #000; border-top: 1px solid #888; }
.canvas { flex: 1; min-width: 0; height: 100%; }
.vscroll { width: 12px; display: flex; flex-direction: column; background: #fbfbf6; }
.vscroll button, .hscroll button { width: 12px; height: 12px; background: #c6d8f8; border: 1px solid #e4ecfc; border-radius: 2px; }
.vscroll svg, .hscroll svg { width: 10px; height: 10px; }
.thumb { height: 11px; margin: 1px; background: #c0d2f6; border: 1px solid #a8bde8; }
.vscroll .end { margin-top: auto; }
.tabs { display: flex; height: 12px; background: #f0ead8; padding-right: 12px; }
.nav { display: flex; margin-right: 3px; }
.nav button { width: 10px; height: 12px; border-right: 1px solid #c9c4b2; }
.nav svg { width: 8px; height: 8px; fill: #b4b0a2; stroke: #b4b0a2; }
.model { width: 32px; color: #fff; background: #000; clip-path: polygon(0 0, 100% 0, 84% 100%, 16% 100%); }
.lay { padding: 0 4px; }
.tabs b { width: 1px; height: 12px; margin: 0 1px; background: #333; transform: skewX(-22deg); }
.hscroll { width: 293px; margin-left: auto; display: flex; justify-content: space-between; background: #fdfdfb; }

.axis { stroke: #a32626; }
.hole { fill: #000; stroke: none; }
.wall { stroke: #b4bcb0; }
.window { stroke: #5fa6a8; fill: #0c1a1a; }
.door { stroke: #5ff0ee; stroke-width: 2; }
.leaf { stroke: #4fc3c3; }
.canvas text { stroke: none; fill: #e0e0e0; }
.vlabel { font-size: 10px; }
.tag { font: 12px "Liberation Sans", sans-serif; }
.ucs { stroke: #999; stroke-width: 2; }
.ucsb { stroke: #ccc; }
.ring { stroke: #3b3b3b; stroke-width: 7; }
.cube { fill: #b5b5b5; stroke: #8c8c8c; }
.canvas .top { fill: #444; font-size: 20px; }
.dir { font-size: 10px; }
.wcs { fill: #9a9aa8; stroke: #666; }
.canvas .wcst { fill: #4e4e58; font-size: 8px; }
.tick { stroke: none; fill: #8a8a96; }
.ears { fill: #c4c4c4; stroke: none; }

/* Command line */
.command { display: flex; height: 36px; gap: 1px; }
.chandle { width: 16px; background: #4a4a4a; display: flex; flex-direction: column; align-items: center; }
.dots { width: 12px; height: 5px; margin-top: 1px; background: repeating-linear-gradient(90deg, #888 0 1px, transparent 1px 2px); }
.chandle button { height: 15px; }
.chandle svg { width: 11px; height: 11px; stroke: #eee; stroke-width: 2; }
.cbody { flex: 1; min-width: 0; display: flex; flex-direction: column; margin-right: 1px; }
.hist { display: flex; align-items: flex-end; height: 20px; line-height: 14px; background: #c8c8c8; border-bottom: 1px solid #888; font-family: "Liberation Mono", "Noto Sans CJK SC", monospace; font-size: 10px; color: #222; }
.cline { flex: 1; display: flex; align-items: center; gap: 5px; padding-left: 1px; background: #fff; }
.prompt { width: 18px; height: 12px; }
.pb { fill: #e4ebf3; stroke: #7d8ea0; }
.prompt .bs { stroke-width: 1; }
.cline input { flex: 1; min-width: 0; }
.cline input::placeholder { color: #999; font-style: italic; opacity: 1; }
.status { height: 19px; flex: none; display: flex; align-items: center; justify-content: space-between; padding: 1px 2px 0 7px; border-top: 1px solid #333; border-bottom: 2px solid #333; background: linear-gradient(#636363, #8f8f8f); color: #0c0c0c; }
.status span { font-family: "Liberation Mono", "Noto Sans CJK SC", monospace; white-space: nowrap; }
.status svg { width: 10px; height: 10px; fill: #d8d8d8; stroke: none; }

/* Overlays */
.pointer { position: absolute; left: 55px; top: 183px; width: 161px; height: 20px; fill: #f5302e; stroke: none; pointer-events: none; }
.ball { position: absolute; right: 0; top: 408px; width: 12px; height: 34px; fill: url(#green); stroke: #d5ead5; }
.ball text { fill: #fff; stroke: none; font: 700 9px "Liberation Sans", sans-serif; }
.mark { position: absolute; right: 55px; bottom: 14px; width: 180px; height: 85px; display: flex; align-items: center; gap: 11px; padding-left: 14px; background: #222f55; color: #d3d6de; }
.mark svg { width: 36px; height: 36px; stroke: #d3d6de; stroke-width: 3; }
.mark .f { fill: #d3d6de; stroke: none; }
.mark p { margin: 0; display: flex; flex-direction: column; }
.mark strong { font: 500 27px/32px "Noto Sans CJK SC", sans-serif; }
.mark span { font: 12px/16px "DejaVu Sans", sans-serif; }
```
